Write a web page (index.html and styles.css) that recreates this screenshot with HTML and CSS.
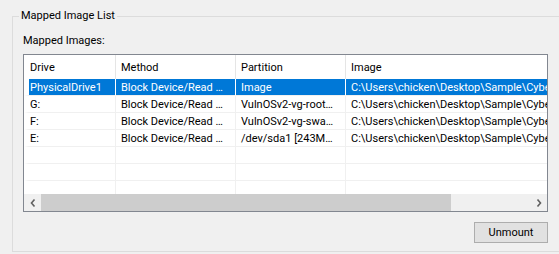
FILE: index.html
```html
<!DOCTYPE html>
<html>
<head>
    <title>Mapped Image List</title>
    <link rel="stylesheet" href="styles.css">
</head>
<body>
    <div class="group">
        <div class="group-title">Mapped Image List</div>
        <div class="caption">Mapped Images:</div>

        <div class="list">
            <div class="viewport">
                <div class="row header">
                    <div class="cell">Drive</div>
                    <div class="cell">Method</div>
                    <div class="cell">Partition</div>
                    <div class="cell">Image</div>
                </div>
                <div class="row selected">
                    <div class="cell">PhysicalDrive1</div>
                    <div class="cell">Block Device/Read …</div>
                    <div class="cell">Image</div>
                    <div class="cell">C:\Users\chicken\Desktop\Sample\Cyber</div>
                </div>
                <div class="row">
                    <div class="cell">G:</div>
                    <div class="cell">Block Device/Read …</div>
                    <div class="cell">VulnOSv2-vg-root…</div>
                    <div class="cell">C:\Users\chicken\Desktop\Sample\Cyber</div>
                </div>
                <div class="row">
                    <div class="cell">F:</div>
                    <div class="cell">Block Device/Read …</div>
                    <div class="cell">VulnOSv2-vg-swa…</div>
                    <div class="cell">C:\Users\chicken\Desktop\Sample\Cyber</div>
                </div>
                <div class="row">
                    <div class="cell">E:</div>
                    <div class="cell">Block Device/Read …</div>
                    <div class="cell">/dev/sda1 [243M…</div>
                    <div class="cell">C:\Users\chicken\Desktop\Sample\Cyber</div>
                </div>
                <div class="row"><div class="cell"></div><div class="cell"></div><div class="cell"></div><div class="cell"></div></div>
                <div class="row"><div class="cell"></div><div class="cell"></div><div class="cell"></div><div class="cell"></div></div>
                <div class="row"><div class="cell"></div><div class="cell"></div><div class="cell"></div><div class="cell"></div></div>
            </div>

            <!-- horizontal scrollbar -->
            <div class="hscroll">
                <div class="arrow">
                    <svg width="6" height="8" viewBox="0 0 6 8"><polyline points="4.5,0.5 1.5,4 4.5,7.5" fill="none" stroke="#606060" stroke-width="1.6"/></svg>
                </div>
                <div class="track">
                    <div class="thumb"></div>
                </div>
                <div class="arrow">
                    <svg width="6" height="8" viewBox="0 0 6 8"><polyline points="1.5,0.5 4.5,4 1.5,7.5" fill="none" stroke="#606060" stroke-width="1.6"/></svg>
                </div>
            </div>
        </div>

        <div class="actions">
            <button type="button">Unmount</button>
        </div>
    </div>
</body>
</html>
```

FILE: styles.css
```css
/* Dialog background and font */
body {
    margin: 0;
    overflow: hidden;
    background-color: #f0f0f0;
    font-family: Roboto, "Noto Sans", sans-serif;
    font-size: 11px;
    color: #000;
}

/* Group box */
.group {
    margin: 16px 0 0 12px;
    height: 236px;
    box-sizing: border-box;
    border: 1px solid #dcdcdc;
    border-right: none;
    padding-left: 10px;
}

    .group-title {
        width: fit-content;
        margin: -9px 0 0 -4px;
        padding: 0 2px;
        line-height: 16px;
        background-color: #f0f0f0;
    }

.caption {
    margin-top: 9px;
    line-height: 16px;
}

/* List view */
.list {
    margin-top: 5px;
    width: 525px;
    height: 158px;
    box-sizing: border-box;
    border: 1px solid #828790;
    background-color: #fff;
}

.viewport {
    height: 139px;
    overflow: hidden;
}

.row {
    display: grid;
    grid-template-columns: 92px 120px 110px 400px;
    height: 17px;
}

    .row .cell {
        box-sizing: border-box;
        border-right: 1px solid #f0f0f0;
        border-bottom: 1px solid #f0f0f0;
        padding-left: 5px;
        line-height: 17px;
        white-space: nowrap;
        overflow: hidden;
    }

        .row .cell:first-child {
            border-left: 5px solid #fff;
            padding-left: 1px;
        }

    .row.header {
        height: 24px;
    }

        .row.header .cell {
            border-right-color: #e5e5e5;
            border-bottom: none;
            line-height: 26px;
        }

    .row.selected .cell {
        background-color: #0078d7;
        color: #fff;
        border-right-color: #fff;
    }

/* Horizontal scrollbar */
.hscroll {
    display: flex;
    height: 17px;
    background-color: #f0f0f0;
}

    .hscroll .arrow {
        width: 17px;
        display: flex;
        align-items: center;
        justify-content: center;
    }

    .hscroll .track {
        flex: 1;
    }

    .hscroll .thumb {
        width: 410px;
        height: 100%;
        background-color: #cdcdcd;
    }

/* Buttons */
.actions {
    width: 525px;
    margin-top: 10px;
    display: flex;
    justify-content: flex-end;
}

button {
    width: 74px;
    height: 21px;
    border: 1px solid #adadad;
    background-color: #e1e1e1;
    font-family: inherit;
    font-size: 11px;
    color: #000;
    padding: 0;
}
```
